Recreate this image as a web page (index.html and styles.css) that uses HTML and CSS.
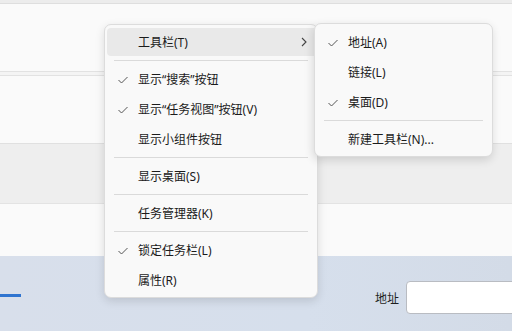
FILE: index.html
```html
<!DOCTYPE html>
<html lang="zh-CN">
<head>
    <meta charset="UTF-8">
    <meta name="viewport" content="width=device-width, initial-scale=1.0">
    <title>任务栏菜单</title>
    <link rel="stylesheet" href="styles.css">
</head>
<body>
    <div class="desktop">
        <div class="strip"></div>
        <div class="pane"></div>
        <div class="rule"></div>
        <div class="pane"></div>
        <div class="band"></div>
        <div class="pane short"></div>

        <div class="taskbar">
            <span class="active-mark"></span>
            <div class="addr-bar">
                <span class="addr-label">地址</span>
                <span class="addr-input"></span>
            </div>
        </div>

        <!-- main context menu -->
        <div class="menu main-menu">
            <div class="item hover">
                <span class="label">工具栏(T)</span>
                <svg class="arrow" width="6" height="10" viewBox="0 0 6 10"><path d="M1 1 L5 5 L1 9" fill="none" stroke="#444" stroke-width="1.1"/></svg>
            </div>
            <div class="sep"></div>
            <div class="item">
                <svg class="check" width="10" height="8" viewBox="0 0 10 8"><path d="M0.5 4 L3.5 7 L9.5 1" fill="none" stroke="#555" stroke-width="1"/></svg>
                <span class="label">显示“搜索”按钮</span>
            </div>
            <div class="item">
                <svg class="check" width="10" height="8" viewBox="0 0 10 8"><path d="M0.5 4 L3.5 7 L9.5 1" fill="none" stroke="#555" stroke-width="1"/></svg>
                <span class="label">显示“任务视图”按钮(V)</span>
            </div>
            <div class="item">
                <span class="label">显示小组件按钮</span>
            </div>
            <div class="sep"></div>
            <div class="item">
                <span class="label">显示桌面(S)</span>
            </div>
            <div class="sep"></div>
            <div class="item">
                <span class="label">任务管理器(K)</span>
            </div>
            <div class="sep"></div>
            <div class="item">
                <svg class="check" width="10" height="8" viewBox="0 0 10 8"><path d="M0.5 4 L3.5 7 L9.5 1" fill="none" stroke="#555" stroke-width="1"/></svg>
                <span class="label">锁定任务栏(L)</span>
            </div>
            <div class="item">
                <span class="label">属性(R)</span>
            </div>
        </div>

        <!-- toolbars submenu -->
        <div class="menu sub-menu">
            <div class="item">
                <svg class="check" width="10" height="8" viewBox="0 0 10 8"><path d="M0.5 4 L3.5 7 L9.5 1" fill="none" stroke="#555" stroke-width="1"/></svg>
                <span class="label">地址(A)</span>
            </div>
            <div class="item">
                <span class="label">链接(L)</span>
            </div>
            <div class="item">
                <svg class="check" width="10" height="8" viewBox="0 0 10 8"><path d="M0.5 4 L3.5 7 L9.5 1" fill="none" stroke="#555" stroke-width="1"/></svg>
                <span class="label">桌面(D)</span>
            </div>
            <div class="sep"></div>
            <div class="item">
                <span class="label">新建工具栏(N)...</span>
            </div>
        </div>
    </div>
</body>
</html>
```

FILE: styles.css
```css
body {
    margin: 0;
    overflow: hidden;
    font-family: "Noto Sans", "Noto Sans CJK SC", sans-serif;
    font-size: 12px;
    color: #1b1b1b;
}

.desktop {
    position: relative;
    width: 512px;
    height: 331px;
    overflow: hidden;
    background: #fafafa;
}

.strip {
    height: 3px;
    background: #ececec;
    border-bottom: 1px solid #dedede;
}

.pane {
    height: 67px;
    background: #fafafa;
}
.pane.short {
    height: 52px;
}

.rule {
    height: 3px;
    background: #f4f4f4;
    border-top: 1px solid #e2e2e2;
    border-bottom: 1px solid #e2e2e2;
}

.band {
    height: 59px;
    background: #eeeeee;
    border-top: 1px solid #e0e0e0;
    border-bottom: 1px solid #e3e3e3;
}

/* taskbar */
.taskbar {
    display: flex;
    align-items: flex-start;
    height: 75px;
    background: linear-gradient(90deg, #d8dfeb, #d6dfec 60%, #d3dbe7);
}
.active-mark {
    width: 21px;
    height: 3px;
    margin-top: 38px;
    background: #2f74d0;
}
.addr-bar {
    display: flex;
    align-items: center;
    margin-left: auto;
    margin-top: 25px;
    margin-right: -20px;
}
.addr-label {
    margin-right: 7px;
    color: #1e1e1e;
}
.addr-input {
    width: 124px;
    height: 31px;
    background: #fff;
    border: 1px solid #b9bcc2;
    border-radius: 4px;
}

/* menus */
.menu {
    position: absolute;
    display: flex;
    flex-direction: column;
    padding: 2px;
    background: #f9f9f9;
    border: 1px solid #dcdcdc;
    border-radius: 7px;
    box-shadow: 0 3px 10px rgba(0, 0, 0, 0.13);
}
.main-menu {
    left: 104px;
    top: 24px;
    width: 208px;
}
.sub-menu {
    left: 314px;
    top: 23px;
    width: 173px;
    padding-top: 3px;
    box-shadow: -1px 3px 10px rgba(0, 0, 0, 0.14);
}

.item {
    position: relative;
    display: flex;
    align-items: center;
    height: 28px;
    margin: 1px 0;
    padding-left: 31px;
    border-radius: 4px;
    white-space: nowrap;
}
.item.hover {
    background: #e9e9e9;
    margin-right: -4px;
}
.check {
    position: absolute;
    left: 11px;
    top: 11px;
}
.arrow {
    position: absolute;
    right: 12px;
    top: 9px;
}

.sep {
    height: 1px;
    margin: 3px 7px;
    background: #dadada;
}
```
